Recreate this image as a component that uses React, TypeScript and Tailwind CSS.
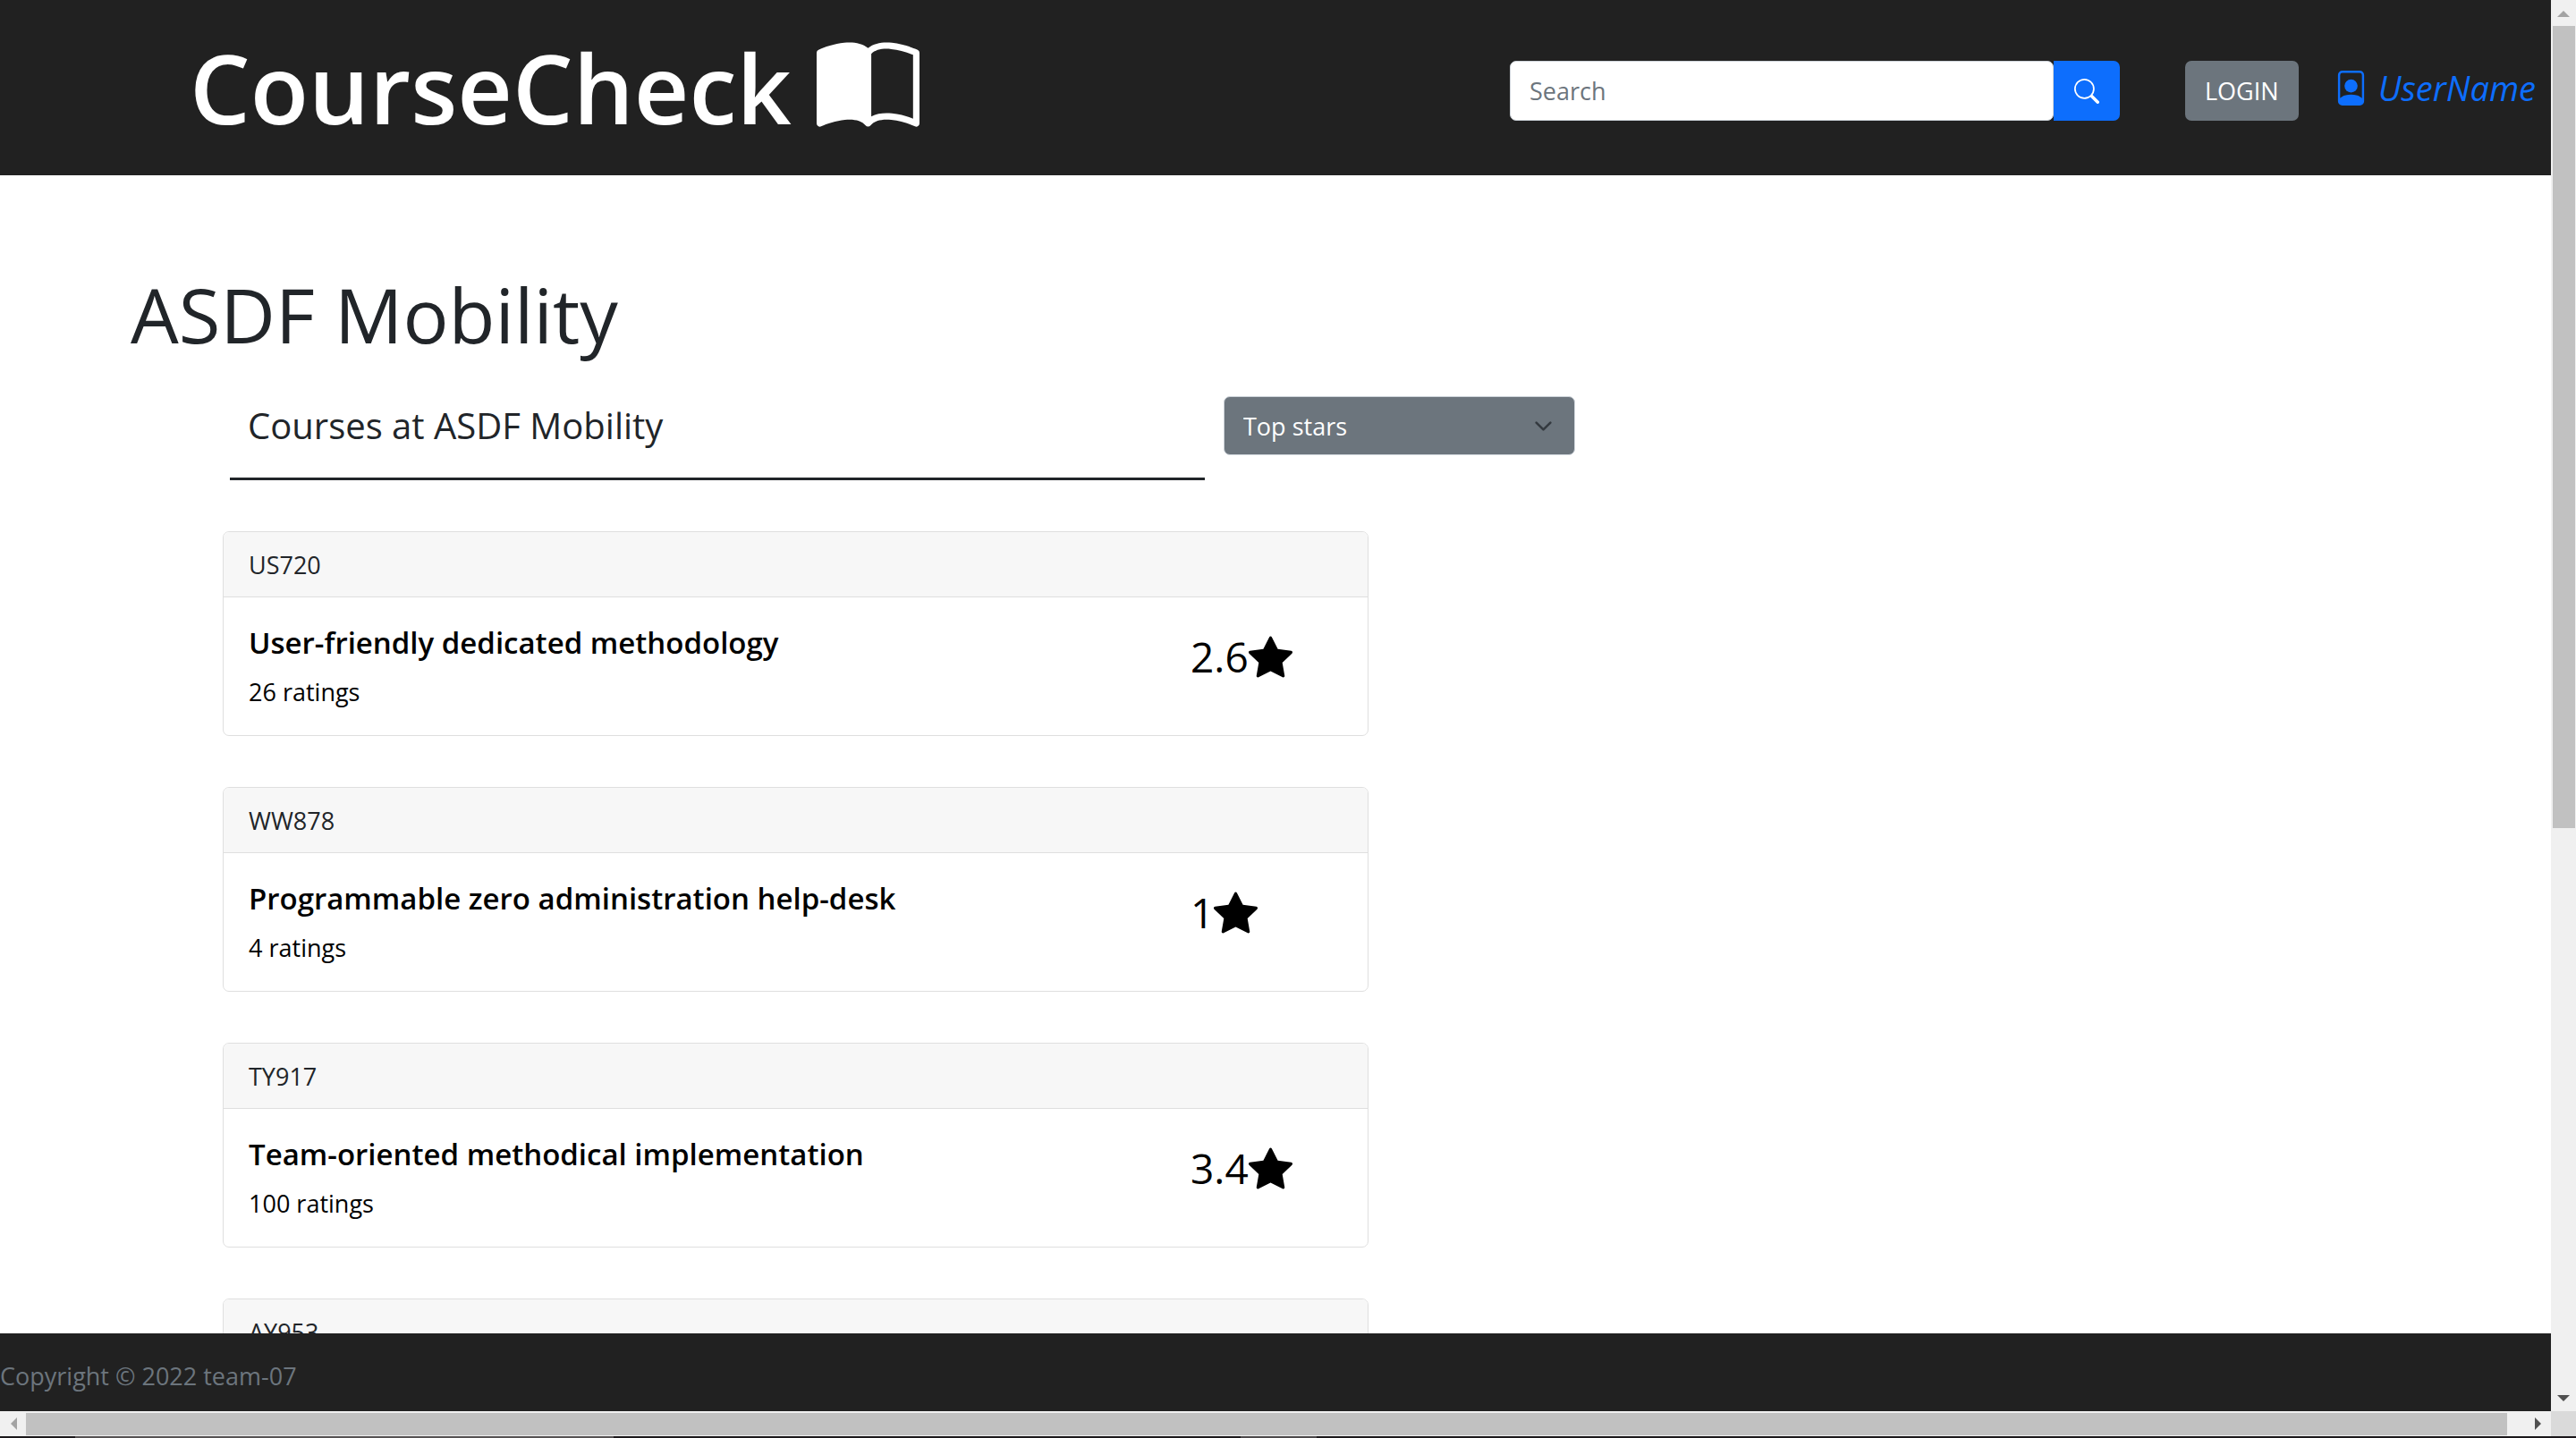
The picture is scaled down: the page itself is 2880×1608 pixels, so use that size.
import { BsBookHalf, BsFilePerson, BsSearch, BsStarFill } from "react-icons/bs";

type Course = { code: string; details?: { title: string; ratings: number; stars: number } };

const courses: Course[] = [
  { code: "US720", details: { title: "User-friendly dedicated methodology", ratings: 26, stars: 2.6 } },
  { code: "WW878", details: { title: "Programmable zero administration help-desk", ratings: 4, stars: 1 } },
  { code: "TY917", details: { title: "Team-oriented methodical implementation", ratings: 100, stars: 3.4 } },
  { code: "AY953" },
];

function Header() {
  return (
    <header className="flex h-[196px] shrink-0 items-center justify-between bg-[#212121] pr-[17px] pl-[212px]">
      <a href="#home" className="flex items-center gap-7 text-[107px] leading-[140px] font-semibold text-white">
        CourseCheck
        <BsBookHalf className="size-[115px]" aria-hidden="true" />
      </a>
      <div className="flex flex-1 items-center justify-end">
        <div className="flex flex-1 justify-end gap-[73px] pt-[7px]">
          <form className="flex h-[67px] w-full max-w-[682px]" onSubmit={(e) => e.preventDefault()}>
            <input
              type="search"
              aria-label="Search"
              placeholder="Search"
              className="min-w-0 flex-1 rounded-[7px] border border-[#ced4da] bg-white px-[21px] pt-0.5 text-[27px] text-[#212529] placeholder:text-[#6c757d]"
            />
            <button
              type="submit"
              aria-label="Submit search"
              className="flex w-[74px] items-center justify-center rounded-r-[7px] bg-[#0d6efd] text-white"
            >
              <BsSearch className="size-7" aria-hidden="true" />
            </button>
          </form>
          <button type="button" className="h-[67px] rounded-[7px] bg-[#6c757d] px-[22px] pt-0.5 text-[27px] text-white">
            LOGIN
          </button>
        </div>
        <a href="#user" className="ml-[39px] flex items-center gap-[11px] text-[38px] leading-[52px] text-[#0d6efd] italic">
          <BsFilePerson className="size-[39px]" aria-hidden="true" />
          UserName
        </a>
      </div>
    </header>
  );
}

function CourseCard({ course }: { course: Course }) {
  const { code, details } = course;
  return (
    <li className="overflow-hidden rounded-[7px] border border-[#dfdfdf]">
      <div className="border-b border-[#dfdfdf] bg-[#f7f7f7] px-7 pt-[17px] pb-[15px] text-[27px] leading-10 text-[#212529]">
        {code}
      </div>
      {details && (
        <a href={`#${code}`} className="flex justify-between py-7 pl-7 text-black">
          <div>
            <h3 className="text-[33px] leading-[46px] font-semibold">{details.title}</h3>
            <p className="mt-3 text-[27px] leading-10">{details.ratings} ratings</p>
          </div>
          <div className="flex h-[76px] w-[198px] items-center text-[46px] leading-[76px]">
            {details.stars}
            <BsStarFill className="size-[49px]" aria-label="stars" />
          </div>
        </a>
      )}
    </li>
  );
}

function Main() {
  return (
    <main className="min-h-0 flex-1 overflow-hidden bg-white pt-[103px] pl-[146px] text-[#212529]">
      <h1 className="text-[85px] leading-[104px]">ASDF Mobility</h1>
      <section className="mt-10 pl-[103px]">
        <div className="flex items-start gap-[21px] pl-2">
          <h2 className="w-full max-w-[1090px] border-b-[3px] border-[#212529] pb-[26px] pl-5 text-[40px] leading-[65px]">
            Courses at ASDF Mobility
          </h2>
          <div className="relative w-full max-w-[393px]">
            <select
              aria-label="Sort courses"
              className="h-[66px] w-full appearance-none rounded-[7px] border border-[#ced4da] bg-[#6c757d] px-[21px] pt-0.5 text-[27px] text-white"
            >
              <option>Top stars</option>
            </select>
            <svg
              viewBox="0 0 16 16"
              className="pointer-events-none absolute inset-y-0 right-[25px] my-auto size-[21px]"
              fill="none"
              stroke="#343a40"
              strokeWidth="2"
              strokeLinecap="round"
              strokeLinejoin="round"
              aria-hidden="true"
            >
              <path d="m2 5 6 6 6-6" />
            </svg>
          </div>
        </div>
        <ul className="mt-[57px] flex max-w-[1281px] flex-col gap-[57px]">
          {courses.map((c) => (
            <CourseCard key={c.code} course={c} />
          ))}
        </ul>
      </section>
    </main>
  );
}

function Arrow({ d, className }: { d: string; className: string }) {
  return (
    <svg viewBox="0 0 14 14" className={`size-[14px] ${className}`} fill="currentColor" aria-hidden="true">
      <path d={d} />
    </svg>
  );
}

function VerticalScrollbar() {
  return (
    <div className="flex w-7 shrink-0 flex-col bg-[#f0f0f0]" aria-hidden="true">
      <div className="flex h-[29px] items-center justify-center">
        <Arrow d="M7 4 14 11H0z" className="text-[#a3a3a3]" />
      </div>
      <div className="flex-1 pr-px pl-0.5">
        <div className="h-[59%] bg-[#c1c1c1]" />
      </div>
      <div className="flex h-[29px] items-center justify-center">
        <Arrow d="M0 3h14L7 10z" className="text-[#505050]" />
      </div>
    </div>
  );
}

function HorizontalScrollbar() {
  return (
    <div className="flex h-7 shrink-0 bg-[#f0f0f0]" aria-hidden="true">
      <div className="flex w-[29px] items-center justify-center">
        <Arrow d="M4 7 11 0v14z" className="text-[#a3a3a3]" />
      </div>
      <div className="flex-1 pt-0.5 pr-5 pb-px">
        <div className="h-full bg-[#c1c1c1]" />
      </div>
      <div className="flex w-[29px] items-center justify-center">
        <Arrow d="M3 0v14l7-7z" className="text-[#505050]" />
      </div>
      <div className="w-7 bg-[#dadada]" />
    </div>
  );
}

export default function App() {
  return (
    <div className="flex h-screen flex-col overflow-hidden font-['Open_Sans',sans-serif]">
      <div className="flex min-h-0 flex-1">
        <div className="flex min-w-0 flex-1 flex-col">
          <Header />
          <Main />
          <footer className="shrink-0 bg-[#212121] pt-7 pb-[19px] text-[27px] leading-10 text-[#6c757d]">
            Copyright © 2022 team-07
          </footer>
        </div>
        <VerticalScrollbar />
      </div>
      <HorizontalScrollbar />
      <div className="flex h-0.5 shrink-0 bg-[#1b181b]" aria-hidden="true">
        <div className="ml-[84px] w-[602px] bg-[#555253]" />
        <div className="ml-[701px] w-[85px] bg-[#4c494b]" />
      </div>
    </div>
  );
}
